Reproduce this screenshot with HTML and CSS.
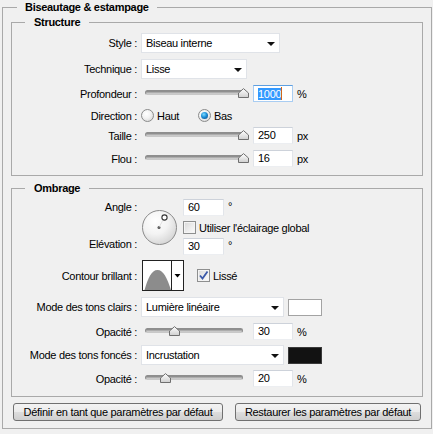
FILE: index.html
```html
<!DOCTYPE html>
<html lang="fr">
<head>
<meta charset="utf-8">
<title>Biseautage &amp; estampage</title>
<link rel="stylesheet" href="styles.css">
</head>
<body>
<fieldset class="group outer">
  <legend class="legend legend-outer">Biseautage &amp; estampage</legend>

  <fieldset class="group inner">
    <legend class="legend legend-inner">Structure</legend>

    <div class="row r-style">
      <span class="label">Style :</span>
      <div class="select select-style"><span class="select-text">Biseau interne</span><i class="arrow"></i></div>
    </div>

    <div class="row r-tech">
      <span class="label">Technique :</span>
      <div class="select select-tech"><span class="select-text">Lisse</span><i class="arrow"></i></div>
    </div>

    <div class="row r-prof">
      <span class="label">Profondeur :</span>
      <div class="slider"><div class="track"></div><svg class="thumb" style="left:97px" width="11" height="10" viewBox="0 0 11 10"><use href="#thumb"/></svg></div>
      <div class="field focused"><span class="sel">1000</span><span class="caret"></span></div>
      <span class="unit">%</span>
    </div>

    <div class="row r-dir">
      <span class="label">Direction :</span>
      <div class="option option-first"><span class="radio"></span><span>Haut</span></div>
      <div class="option"><span class="radio on"></span><span>Bas</span></div>
    </div>

    <div class="row r-taille">
      <span class="label">Taille :</span>
      <div class="slider"><div class="track"></div><svg class="thumb" style="left:97px" width="11" height="10" viewBox="0 0 11 10"><use href="#thumb"/></svg></div>
      <div class="field">250</div>
      <span class="unit">px</span>
    </div>

    <div class="row r-flou">
      <span class="label">Flou :</span>
      <div class="slider"><div class="track"></div><svg class="thumb" style="left:97px" width="11" height="10" viewBox="0 0 11 10"><use href="#thumb"/></svg></div>
      <div class="field">16</div>
      <span class="unit">px</span>
    </div>
  </fieldset>

  <fieldset class="group inner shade">
    <legend class="legend legend-inner">Ombrage</legend>

    <div class="angle-block">
      <div class="angle-labels">
        <span class="label label-17">Angle :</span>
        <span class="label label-17 label-elev">Elévation :</span>
      </div>
      <svg class="dial" width="35" height="35" viewBox="0 0 35 35">
        <defs>
          <radialGradient id="dialg" cx="0.38" cy="0.32" r="0.75">
            <stop offset="0" stop-color="#ffffff"/>
            <stop offset="0.5" stop-color="#f3f3f3"/>
            <stop offset="1" stop-color="#d2d2d2"/>
          </radialGradient>
        </defs>
        <circle cx="17.5" cy="17.5" r="17" fill="url(#dialg)" stroke="#8a8a8a" stroke-width="1"/>
        <circle cx="17" cy="17.5" r="1.5" fill="#555"/>
        <line x1="17" y1="17.5" x2="22" y2="8" stroke="#cfcfcf" stroke-width="0.6"/>
        <circle cx="22.5" cy="7.5" r="2.6" fill="#fff" stroke="#333" stroke-width="1.1"/>
      </svg>
      <div class="angle-controls">
        <div class="ctrl-line"><div class="field field-41">60</div><span class="unit deg">°</span></div>
        <div class="ctrl-line check-line"><span class="check"></span><span>Utiliser l'éclairage global</span></div>
        <div class="ctrl-line"><div class="field field-41">30</div><span class="unit deg">°</span></div>
      </div>
    </div>

    <div class="row r-contour">
      <span class="label">Contour brillant :</span>
      <svg class="contour" width="42" height="31" viewBox="0 0 42 31">
        <rect x="0.5" y="0.5" width="41" height="30" fill="#fff" stroke="#222"/>
        <path d="M2.5,30 C6,18 9.5,10 15.5,10 C21.5,10 25,18 29,30 Z" fill="#8c8c8c"/>
        <line x1="29.5" y1="0.5" x2="29.5" y2="30.5" stroke="#222"/>
        <polygon points="32.5,14 38.5,14 35.5,17.5" fill="#000"/>
      </svg>
      <div class="option lisse"><span class="check on"><svg width="11" height="11" viewBox="0 0 11 11"><path d="M2,5.5 L4.5,8.5 L9.5,1.5" fill="none" stroke="#3a58a8" stroke-width="1.8"/></svg></span><span>Lissé</span></div>
    </div>

    <div class="row r-mode1">
      <span class="label">Mode des tons clairs :</span>
      <div class="select select-mode"><span class="select-text">Lumière linéaire</span><i class="arrow"></i></div>
      <span class="swatch swatch-white"></span>
    </div>

    <div class="row r-op1">
      <span class="label">Opacité :</span>
      <div class="slider"><div class="track track-op"></div><svg class="thumb" style="left:28px" width="11" height="10" viewBox="0 0 11 10"><use href="#thumb"/></svg></div>
      <div class="field">30</div>
      <span class="unit">%</span>
    </div>

    <div class="row r-mode2">
      <span class="label">Mode des tons foncés :</span>
      <div class="select select-mode"><span class="select-text">Incrustation</span><i class="arrow"></i></div>
      <span class="swatch swatch-black"></span>
    </div>

    <div class="row r-op2">
      <span class="label">Opacité :</span>
      <div class="slider"><div class="track track-op"></div><svg class="thumb" style="left:19px" width="11" height="10" viewBox="0 0 11 10"><use href="#thumb"/></svg></div>
      <div class="field">20</div>
      <span class="unit">%</span>
    </div>
  </fieldset>

  <div class="buttons">
    <button class="btn btn-def" type="button">Définir en tant que paramètres par défaut</button>
    <button class="btn btn-rest" type="button">Restaurer les paramètres par défaut</button>
  </div>
</fieldset>

<svg class="defs" width="0" height="0">
  <defs>
    <linearGradient id="thumbg" x1="0" y1="0" x2="0" y2="1">
      <stop offset="0" stop-color="#ffffff"/>
      <stop offset="1" stop-color="#cfcfcf"/>
    </linearGradient>
    <g id="thumb">
      <polygon points="0.5,9.5 0.5,5 5.5,0.6 10.5,5 10.5,9.5" fill="url(#thumbg)" stroke="#6f6f6f" stroke-width="1"/>
    </g>
  </defs>
</svg>
</body>
</html>
```

FILE: styles.css
```css
* { box-sizing: border-box; }
html, body { margin: 0; padding: 0; background: #f0f0f0; }
body {
  font-family: "Liberation Sans", Arial, sans-serif;
  font-size: 11px;
  letter-spacing: -0.3px;
  color: #000;
  width: 433px;
  height: 434px;
  overflow: hidden;
}

.defs { position: absolute; width: 0; height: 0; }

.group {
  border: 1px solid #a9a9a9;
  margin: 0;
  padding: 0;
  min-width: 0;
}
.outer { margin-left: 2px; width: 430px; padding-bottom: 7px; }
.inner { margin: 1px 8px 0; padding-bottom: 8px; }
.shade { margin-top: 5px; padding-bottom: 9px; }

.legend { font-weight: bold; line-height: 14px; padding: 0 8px; }
.legend-outer { margin-left: 14px; }
.legend-inner { margin-left: 13px; padding: 0 9px; }

.row { display: flex; align-items: center; }
.label {
  flex: none;
  width: 125px;
  margin-right: 4px;
  text-align: right;
  white-space: nowrap;
}
.label-17 { display: block; height: 17px; line-height: 17px; }
.label-elev { margin-top: 20px; }

.r-style { margin-top: 4px; height: 20px; }
.r-tech { margin-top: 6px; height: 20px; }
.r-prof { margin-top: 6px; height: 17px; }
.r-dir { margin-top: 5px; height: 17px; }
.r-taille { margin-top: 3px; height: 17px; }
.r-flou { margin-top: 6px; height: 17px; }

.angle-block { display: flex; margin-top: 4px; height: 56px; }
.r-contour { margin-top: 5px; height: 31px; }
.r-mode1 { margin-top: 6px; height: 20px; }
.r-op1 { margin-top: 6px; height: 17px; }
.r-mode2 { margin-top: 5px; height: 20px; }
.r-op2 { margin-top: 5px; height: 17px; }

/* select */
.select {
  flex: none;
  height: 20px;
  background: #fff;
  border: 1px solid #e0e3e8;
  display: flex;
  align-items: center;
  justify-content: space-between;
  padding: 0 4px 0 4px;
}
.select-style { width: 139px; }
.select-tech { width: 106px; }
.select-mode { width: 143px; }
.arrow {
  width: 0; height: 0;
  border-left: 4px solid transparent;
  border-right: 4px solid transparent;
  border-top: 4px solid #111;
  margin-top: 1px;
}

/* slider */
.slider { flex: none; width: 108px; height: 17px; margin-right: 4px; position: relative; }
.track {
  margin: 5px 0 0 4px;
  width: 101px;
  height: 5px;
  border-radius: 3px;
  background: linear-gradient(#7d7d7d 0, #9d9d9d 30%, #bdbdbd 70%, #d9d9d9 100%);
  border: 1px solid #8e8e8e;
  border-bottom-color: #c8c8c8;
}
.track-op { width: 98px; }
.thumb { position: absolute; top: 3px; }

/* text field */
.field {
  flex: none;
  width: 40px;
  height: 17px;
  background: #fff;
  border: 1px solid;
  border-color: #cdd2da #e2e5ea #eceef1 #e2e5ea;
  padding-left: 4px;
  line-height: 15px;
  display: flex;
  align-items: center;
}
.field-41 { width: 41px; }
.field.focused { border-color: #5e9fe0 #a9cdf2 #a9cdf2 #a9cdf2; }
.sel { background: #3399ff; color: #fff; line-height: 12px; padding: 0; }
.caret { width: 1px; height: 13px; background: #d0661c; }
.unit { margin-left: 4px; }
.deg { margin-top: -3px; }

/* radio / checkbox options */
.option { display: flex; align-items: center; }
.option-first { width: 57px; }
.radio {
  flex: none;
  width: 13px; height: 13px;
  border-radius: 50%;
  border: 1px solid #8a8b8b;
  background: radial-gradient(circle at 40% 35%, #ffffff 0, #f2f2f2 45%, #cfcfcf 100%);
  margin-right: 3px;
  display: flex;
  align-items: center;
  justify-content: center;
}
.radio.on::after {
  content: "";
  width: 7px; height: 7px;
  border-radius: 50%;
  background: radial-gradient(circle at 40% 35%, #7fdcff 0, #1d8fd9 45%, #0a3f78 100%);
}

.check {
  flex: none;
  width: 13px; height: 13px;
  border: 1px solid #8e8f8f;
  background: linear-gradient(135deg, #d8d8d8 0, #efefef 60%, #fbfbfb 100%);
  box-shadow: inset 0 0 0 1px #f4f4f4;
  margin-right: 3px;
  display: flex;
  align-items: center;
  justify-content: center;
}

/* angle block */
.angle-labels { flex: none; }
.dial { flex: none; margin: 11px 0 0 1px; }
.angle-controls { margin-left: 6px; display: flex; flex-direction: column; }
.ctrl-line { display: flex; align-items: center; height: 17px; }
.check-line { height: 13px; margin: 5px 0 4px; }

/* contour */
.contour { flex: none; margin-left: 1px; }
.lisse { margin-left: 13px; }

/* swatches */
.swatch { flex: none; width: 34px; height: 17px; margin-left: 4px; margin-top: 2px; align-self: flex-start; }
.swatch-white { background: #fff; border: 1px solid #a3a3a3; }
.swatch-black { background: #121212; border: 1px solid #3a3a3a; }

/* buttons */
.buttons { display: flex; margin: 6px 0 0 10px; }
.btn {
  height: 18px;
  border: 1px solid #707070;
  border-radius: 3px;
  background: linear-gradient(#f3f3f3 0, #ebebeb 50%, #dddddd 51%, #cfcfcf 100%);
  font: inherit;
  letter-spacing: inherit;
  color: #000;
  padding: 0;
  display: flex;
  align-items: center;
  justify-content: center;
}
.btn-def { width: 210px; }
.btn-rest { width: 186px; margin-left: 12px; }
```
